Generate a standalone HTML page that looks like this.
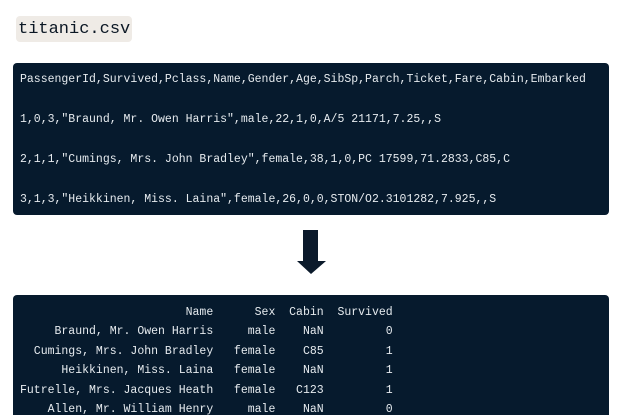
<!DOCTYPE html>
<html><head><style>
body{margin:0;width:643px;height:415px;background:#fff;overflow:hidden;position:relative;font-family:"Liberation Mono",monospace;}
.chip{position:absolute;left:16px;top:16px;height:26px;padding:0 2px;background:#efebe6;border-radius:4px;font-size:17px;line-height:27px;color:#0b1724;}
.box{position:absolute;left:13px;width:596px;background:#061a2d;border-radius:4px;color:#e6ebef;}
pre{margin:0;font-family:"Liberation Mono",monospace;font-size:11.5px;}
.b1{top:63px;height:152px;overflow:hidden;}
.b1 pre{position:absolute;left:7px;top:-3px;line-height:40px;}
.b2{top:295px;height:120px;overflow:hidden;border-radius:4px 4px 0 0;}
.b2 pre{position:absolute;left:7px;top:8px;line-height:19.4px;}
</style></head><body>
<div class="chip">titanic.csv</div>
<div class="box b1"><pre>PassengerId,Survived,Pclass,Name,Gender,Age,SibSp,Parch,Ticket,Fare,Cabin,Embarked
1,0,3,"Braund, Mr. Owen Harris",male,22,1,0,A/5 21171,7.25,,S
2,1,1,"Cumings, Mrs. John Bradley",female,38,1,0,PC 17599,71.2833,C85,C
3,1,3,"Heikkinen, Miss. Laina",female,26,0,0,STON/O2.3101282,7.925,,S</pre></div>
<svg style="position:absolute;left:296px;top:230px" width="31" height="45"><path d="M7 0H22V31H30L15 44L1 31H7Z" fill="#0b1a2b"/></svg>
<div class="box b2"><pre>                        Name      Sex  Cabin  Survived
     Braund, Mr. Owen Harris     male    NaN         0
  Cumings, Mrs. John Bradley   female    C85         1
      Heikkinen, Miss. Laina   female    NaN         1
Futrelle, Mrs. Jacques Heath   female   C123         1
    Allen, Mr. William Henry     male    NaN         0</pre></div>
</body></html>
